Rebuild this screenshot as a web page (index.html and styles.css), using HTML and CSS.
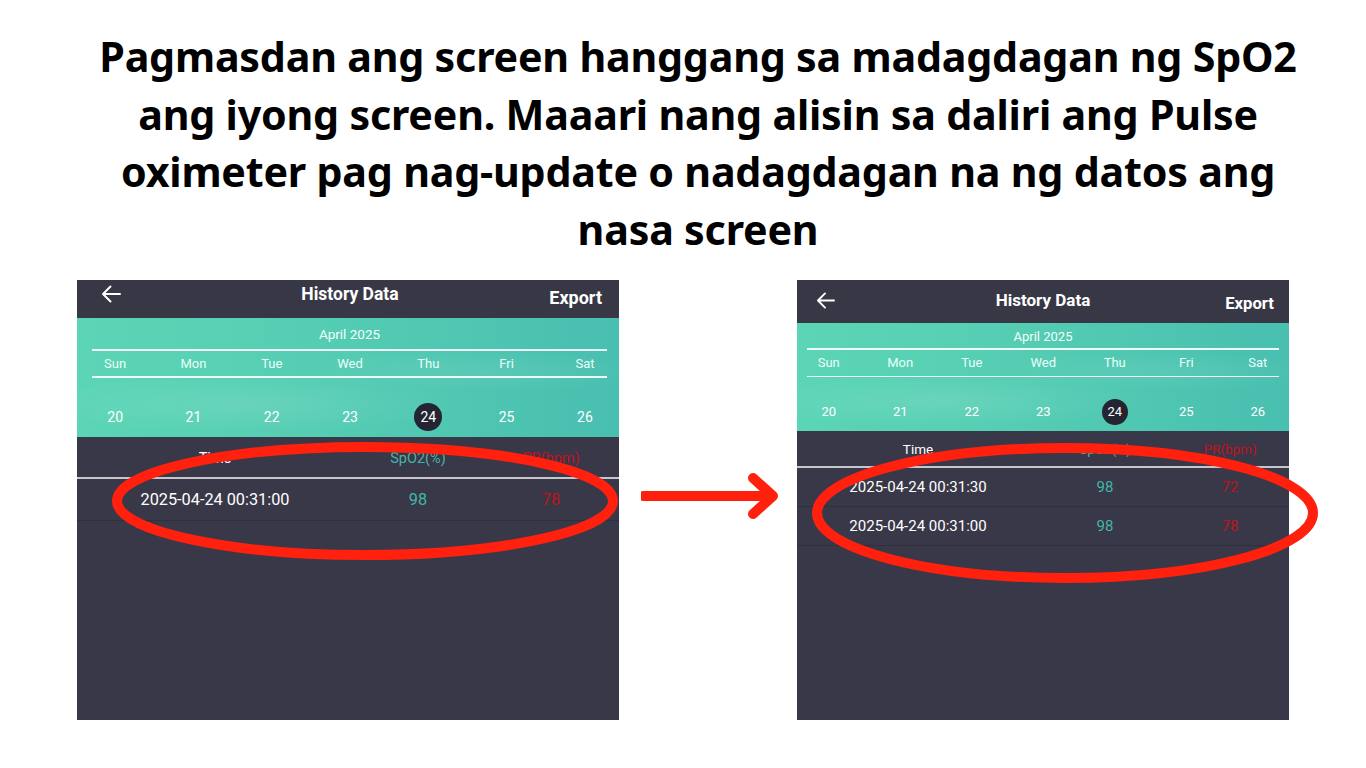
FILE: index.html
```html
<!DOCTYPE html>
<html lang="tl">
<head>
<meta charset="utf-8">
<title>History Data</title>
<link rel="stylesheet" href="styles.css">
</head>
<body>
<h1 class="title">Pagmasdan ang screen hanggang sa madagdagan ng SpO2<br>ang iyong screen. Maaari nang alisin sa daliri ang Pulse<br>oximeter pag nag-update o nadagdagan na ng datos ang<br>nasa screen</h1>

<div class="stage">
  <div class="panel panel-left">
    <div class="hdr">
      <svg class="back" viewBox="0 0 20 18" width="20" height="18"><path d="M19 9H2M9.5 1.5L2 9l7.5 7.5" fill="none" stroke="#fff" stroke-width="2" stroke-linecap="round" stroke-linejoin="round"/></svg>
      <span class="hdr-title">History Data</span>
      <span class="export">Export</span>
    </div>
    <div class="cal">
      <div class="month">April 2025</div>
      <div class="rule"></div>
      <div class="week"><span>Sun</span><span>Mon</span><span>Tue</span><span>Wed</span><span>Thu</span><span>Fri</span><span>Sat</span></div>
      <div class="rule"></div>
      <div class="dates"><span>20</span><span>21</span><span>22</span><span>23</span><span><b class="sel">24</b></span><span>25</span><span>26</span></div>
    </div>
    <div class="thead"><span class="c-time">Time</span><span class="c-spo2">SpO2(%)</span><span class="c-pr">PR(bpm)</span></div>
    <div class="trow"><span class="c-time">2025-04-24 00:31:00</span><span class="c-spo2">98</span><span class="c-pr">78</span></div>
    <svg class="ring" width="520" height="130" viewBox="0 0 520 130"><ellipse cx="260" cy="64" rx="248" ry="54" fill="none" stroke="#ff200e" stroke-width="10"/></svg>
  </div>

  <div class="arrow-wrap">
    <svg width="140" height="52" viewBox="0 0 140 52"><path d="M2 26H128M112 8L132 26 112 44" fill="none" stroke="#ff200e" stroke-width="10" stroke-linejoin="round" stroke-linecap="round"/><path d="M2 26H10" stroke="#ff200e" stroke-width="10"/></svg>
  </div>

  <div class="panel panel-right">
    <div class="hdr">
      <svg class="back" viewBox="0 0 20 18" width="19" height="17"><path d="M19 9H2M9.5 1.5L2 9l7.5 7.5" fill="none" stroke="#fff" stroke-width="2" stroke-linecap="round" stroke-linejoin="round"/></svg>
      <span class="hdr-title">History Data</span>
      <span class="export">Export</span>
    </div>
    <div class="cal">
      <div class="month">April 2025</div>
      <div class="rule"></div>
      <div class="week"><span>Sun</span><span>Mon</span><span>Tue</span><span>Wed</span><span>Thu</span><span>Fri</span><span>Sat</span></div>
      <div class="rule"></div>
      <div class="dates"><span>20</span><span>21</span><span>22</span><span>23</span><span><b class="sel">24</b></span><span>25</span><span>26</span></div>
    </div>
    <div class="thead"><span class="c-time">Time</span><span class="c-spo2">SpO2(%)</span><span class="c-pr">PR(bpm)</span></div>
    <div class="trow"><span class="c-time">2025-04-24 00:31:30</span><span class="c-spo2">98</span><span class="c-pr">72</span></div>
    <div class="trow"><span class="c-time">2025-04-24 00:31:00</span><span class="c-spo2">98</span><span class="c-pr">78</span></div>
    <svg class="ring" width="520" height="150" viewBox="0 0 520 150"><ellipse cx="260" cy="75" rx="248" ry="65" fill="none" stroke="#ff200e" stroke-width="10"/></svg>
  </div>
</div>
</body>
</html>
```

FILE: styles.css
```css
* { box-sizing: border-box; }
html, body { margin: 0; padding: 0; background: #fff; }
body { width: 1366px; height: 768px; overflow: hidden; font-family: Roboto, "Liberation Sans", sans-serif; }

.title {
  margin: 0;
  padding: 28px 0 0 30px;
  height: 280px;
  text-align: center;
  font-family: "Noto Sans", "Open Sans", sans-serif;
  font-weight: 700;
  font-size: 41.2px;
  line-height: 57.5px;
  color: #000;
  letter-spacing: -0.2px;
}

.stage { display: flex; align-items: flex-start; padding-left: 77px; }

.panel {
  position: relative;
  height: 440px;
  background: #393848;
  color: #fff;
  display: flex;
  flex-direction: column;
}
.panel-left { width: 542px; }
.panel-right { width: 492px; }

.arrow-wrap { width: 178px; display: flex; justify-content: center; padding-top: 190px; padding-left: 6px; }

.hdr {
  position: relative;
  display: flex;
  align-items: center;
  justify-content: space-between;
  background: #383746;
}
.panel-left .hdr { height: 38px; padding: 0 17px 0 24px; }
.panel-right .hdr { height: 43px; padding: 0 15px 0 19px; }
.back { display: block; }
.panel-left .back { margin-top: -10px; }
.panel-right .back { margin-top: -3px; }
.hdr-title {
  position: absolute;
  left: 0; right: 0;
  text-align: center;
  font-weight: 700;
  font-size: 17.5px;
  pointer-events: none;
}
.panel-left .hdr-title { top: 4px; transform: translateX(2px); }
.panel-right .hdr-title { top: 10px; font-size: 17px; }
.export { font-weight: 700; font-size: 18px; }
.panel-left .export { margin-top: -4px; }
.panel-right .export { margin-top: 4px; font-size: 16.7px; }

.cal {
  position: relative;
  overflow: hidden;
  background:
    radial-gradient(ellipse 60% 35% at 30% 72%, rgba(255,255,255,0.10), rgba(255,255,255,0) 70%),
    radial-gradient(ellipse 50% 25% at 75% 45%, rgba(255,255,255,0.07), rgba(255,255,255,0) 70%),
    linear-gradient(90deg, #5bd5b5 0%, #55cdb3 45%, #48bfb0 100%);
}
.panel-left .cal { height: 119px; padding: 0 12px 0 15px; }
.panel-right .cal { height: 108px; padding: 0 10px; }

.month { text-align: center; font-size: 13.5px; color: #f3fffb; }
.panel-left .month { height: 31px; line-height: 32px; }
.panel-right .month { height: 25px; line-height: 27px; font-size: 13px; }
.rule { height: 2px; background: rgba(255,255,255,0.9); }
.panel-right .rule { height: 1.5px; }

.week, .dates { display: grid; text-align: center; }
.panel-left .week, .panel-left .dates { grid-template-columns: repeat(7, 78.3px); margin-left: -16px; }
.panel-right .week, .panel-right .dates { grid-template-columns: repeat(7, 71.5px); margin-left: -14px; }
.week { font-size: 13px; color: #eafff8; }
.panel-left .week { height: 25px; line-height: 25px; }
.panel-right .week { height: 26px; line-height: 26px; }
.dates { font-size: 14px; color: #fff; }
.panel-left .dates { padding-top: 25px; line-height: 28px; }
.panel-right .dates { padding-top: 22px; line-height: 26px; font-size: 13px; }
.sel {
  display: inline-block;
  font-weight: 400;
  background: #252433;
  border-radius: 50%;
  text-align: center;
}
.panel-left .sel { width: 28px; height: 28px; line-height: 28px; }
.panel-right .sel { width: 26px; height: 26px; line-height: 26px; }

.thead, .trow { display: grid; align-items: center; text-align: center; }
.panel-left .thead, .panel-left .trow { grid-template-columns: 276px 130px 136px; }
.panel-right .thead, .panel-right .trow { grid-template-columns: 242px 132px 118px; }
.thead { border-bottom: 2px solid #c6c6cc; }
.panel-left .thead { height: 42px; padding-top: 2px; font-size: 14.5px; }
.panel-right .thead { height: 37px; font-size: 13.5px; }
.trow { border-bottom: 1px solid #302f3d; }
.panel-left .trow { height: 42px; font-size: 16.3px; }
.panel-right .trow { height: 39px; font-size: 15px; }
.c-time { color: #fff; }
.c-spo2 { color: #42b6a6; }
.c-pr { color: #c0121c; }

.ring { position: absolute; overflow: visible; pointer-events: none; }
.panel-left .ring { left: 28px; top: 157px; }
.panel-right .ring { left: 8px; top: 158px; }
```
